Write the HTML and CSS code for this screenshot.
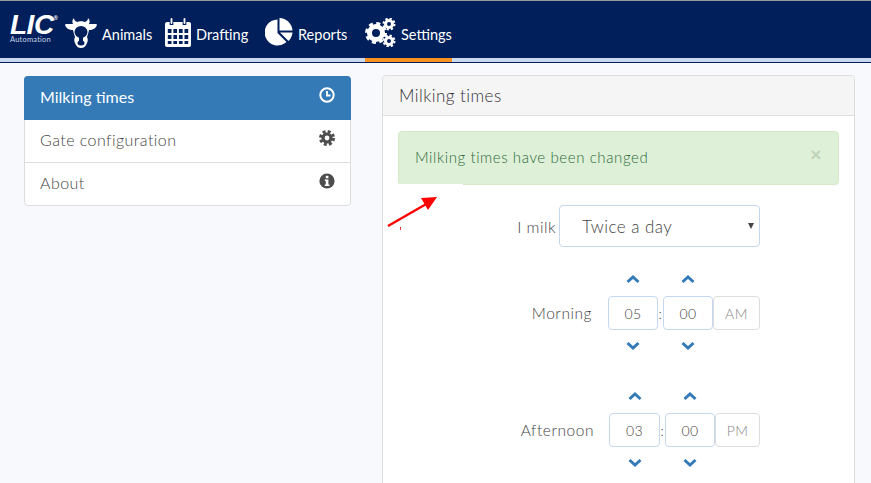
FILE: index.html
```html
<!DOCTYPE html>
<html lang="en">
<head>
    <meta charset="UTF-8">
    <title>Milking times</title>
    <link rel="stylesheet" href="styles.css">
</head>
<body>
    <!-- Top navigation -->
    <nav class="navbar">
        <div class="logo">
            <div class="logo-mark">LIC<sup>®</sup></div>
            <div class="logo-sub">Automation</div>
        </div>
        <a class="nav-item nav-animals">
            <svg width="32" height="32" viewBox="0 0 32 32"><path fill="#fff" d="M9 2c0 2 1 3 3 4 2-1 6-1 8 0 2-1 3-2 3-4 2 2 2 4 1 6l7 0c1 .5 1 1 1 1-1 3-4 5-8 5-.5 3-1.500 5-2 7 1 2 1 4 0 6-1 3-3 5-6 5s-5-2-6-5c-1-2-1-4 0-6-.5-2-1.500-4-2-7-4 0-7-2-8-5 0 0 0-.5 1-1l7 0C7 6 7 4 9 2z"/><ellipse fill="#001f5b" cx="16" cy="16" rx="6.500" ry="6"/><rect fill="#001f5b" x="14" y="20" width="4" height="6"/><ellipse fill="#001f5b" cx="16" cy="27" rx="3.500" ry="2.500"/></svg>
            <span>Animals</span>
        </a>
        <a class="nav-item nav-drafting">
            <svg class="calendar" width="26" height="29" viewBox="0 0 28 29" preserveAspectRatio="none"><path fill="#fff" fill-rule="evenodd" d="M2 4h3v3h4V4h10v3h4V4h3c1 0 2 1 2 2v21c0 1-1 2-2 2H2c-1 0-2-1-2-2V6c0-1 1-2 2-2zM3 11v4h4v-4zm6 0v4h4v-4zm6 0v4h4v-4zm6 0v4h4v-4zM3 17v4h4v-4zm6 0v4h4v-4zm6 0v4h4v-4zm6 0v4h4v-4zM3 23v3h4v-3zm6 0v3h4v-3zm6 0v3h4v-3zm6 0v3h4v-3z"/><rect fill="#fff" x="6" y="0" width="2" height="6" rx="1"/><rect fill="#fff" x="20" y="0" width="2" height="6" rx="1"/></svg>
            <span>Drafting</span>
        </a>
        <a class="nav-item nav-reports">
            <svg width="28" height="28" viewBox="0 0 28 28"><path fill="#fff" d="M12.500 1.500V15l9 9A13 13 0 1 1 12.500 1.500z"/><path fill="#fff" d="M14.500 0A13.500 13.500 0 0 1 27.500 12.500H14.500z"/><path fill="#fff" d="M27.500 14.500a13.500 13.500 0 0 1-4 8.500l-8.500-8.500z"/></svg>
            <span>Reports</span>
        </a>
        <a class="nav-item nav-settings active">
            <svg width="31" height="29" viewBox="0 0 31 29">
                <circle cx="11" cy="15" r="6.500" fill="none" stroke="#fff" stroke-width="5"/>
                <circle cx="11" cy="15" r="9.500" fill="none" stroke="#fff" stroke-width="3" stroke-dasharray="4 3.460"/>
                <circle cx="24" cy="6" r="3.500" fill="none" stroke="#fff" stroke-width="3"/>
                <circle cx="24" cy="6" r="5.500" fill="none" stroke="#fff" stroke-width="2" stroke-dasharray="2.300 2"/>
                <circle cx="24" cy="23" r="3.500" fill="none" stroke="#fff" stroke-width="3"/>
                <circle cx="24" cy="23" r="5.500" fill="none" stroke="#fff" stroke-width="2" stroke-dasharray="2.300 2"/>
            </svg>
            <span>Settings</span>
        </a>
    </nav>

    <div class="page">
        <!-- Side menu -->
        <ul class="side-menu">
            <li class="side-item active">
                Milking times
                <svg width="16" height="16" viewBox="0 0 16 16"><circle cx="8" cy="8" r="6.700" fill="none" stroke="#fff" stroke-width="2"/><path d="M8 4v4.500h3.500" fill="none" stroke="#fff" stroke-width="1.800"/></svg>
            </li>
            <li class="side-item">
                Gate configuration
                <svg width="16" height="16" viewBox="0 0 16 16"><circle cx="8" cy="8" r="4" fill="none" stroke="#4d4d4d" stroke-width="3.200"/><circle cx="8" cy="8" r="6.500" fill="none" stroke="#4d4d4d" stroke-width="3" stroke-dasharray="2.900 2.200"/></svg>
            </li>
            <li class="side-item">
                About
                <svg width="16" height="16" viewBox="0 0 16 16"><circle cx="8" cy="8" r="7.600" fill="#4d4d4d"/><rect x="6.800" y="2.800" width="2.600" height="2.500" fill="#fff"/><path fill="#fff" d="M5.800 6.500h3.600v5h1v1.600H5.800v-1.600h1V8.100h-1z"/></svg>
            </li>
        </ul>

        <!-- Milking times panel -->
        <section class="panel">
            <div class="panel-heading">Milking times</div>
            <div class="panel-body">
                <div class="alert">
                    Milking times have been changed
                    <span class="alert-close">×</span>
                </div>
                <div class="alert-notch"></div>

                <svg class="arrow" width="54" height="36" viewBox="0 0 54 36">
                    <path d="M2 31L42 8" stroke="#f00" stroke-width="2.400"/>
                    <path d="M51 2L35 3l7 12z" fill="#f00"/>
                    <rect x="14" y="32" width="1" height="3" fill="#e33"/>
                </svg>

                <div class="milk-form">
                    <div class="frequency-row">
                        <label class="frequency-label">I milk</label>
                        <div class="fake-select">Twice a day<span class="select-caret"></span></div>
                    </div>

                    <div class="time-row">
                        <label class="time-label">Morning</label>
                        <div class="time-picker morning">
                            <span class="chevron chevron-up"><svg width="14" height="9" viewBox="0 0 14 9"><path d="M1.500 7L7 2l5.500 5" fill="none" stroke="#337ab7" stroke-width="3"/></svg></span>
                            <span></span>
                            <span class="chevron chevron-up"><svg width="14" height="9" viewBox="0 0 14 9"><path d="M1.500 7L7 2l5.500 5" fill="none" stroke="#337ab7" stroke-width="3"/></svg></span>
                            <span></span>
                            <div class="time-box">05</div>
                            <span class="colon">:</span>
                            <div class="time-box">00</div>
                            <div class="ampm">AM</div>
                            <span class="chevron chevron-down"><svg width="14" height="9" viewBox="0 0 14 9"><path d="M1.500 2L7 7l5.500-5" fill="none" stroke="#337ab7" stroke-width="3"/></svg></span>
                            <span></span>
                            <span class="chevron chevron-down"><svg width="14" height="9" viewBox="0 0 14 9"><path d="M1.500 2L7 7l5.500-5" fill="none" stroke="#337ab7" stroke-width="3"/></svg></span>
                            <span></span>
                        </div>
                    </div>

                    <div class="time-row afternoon-row">
                        <label class="time-label">Afternoon</label>
                        <div class="time-picker afternoon">
                            <span class="chevron chevron-up"><svg width="14" height="9" viewBox="0 0 14 9"><path d="M1.500 7L7 2l5.500 5" fill="none" stroke="#337ab7" stroke-width="3"/></svg></span>
                            <span></span>
                            <span class="chevron chevron-up"><svg width="14" height="9" viewBox="0 0 14 9"><path d="M1.500 7L7 2l5.500 5" fill="none" stroke="#337ab7" stroke-width="3"/></svg></span>
                            <span></span>
                            <div class="time-box">03</div>
                            <span class="colon">:</span>
                            <div class="time-box">00</div>
                            <div class="ampm">PM</div>
                            <span class="chevron chevron-down"><svg width="14" height="9" viewBox="0 0 14 9"><path d="M1.500 2L7 7l5.500-5" fill="none" stroke="#337ab7" stroke-width="3"/></svg></span>
                            <span></span>
                            <span class="chevron chevron-down"><svg width="14" height="9" viewBox="0 0 14 9"><path d="M1.500 2L7 7l5.500-5" fill="none" stroke="#337ab7" stroke-width="3"/></svg></span>
                            <span></span>
                        </div>
                    </div>
                </div>
            </div>
        </section>
    </div>
</body>
</html>
```

FILE: styles.css
```css
/* General styles */
html, body {
    height: 483px;
    overflow: hidden;
}

body {
    margin: 0;
    font-family: 'Lato', 'Noto Sans', sans-serif;
    font-size: 16px;
    font-weight: 300;
    letter-spacing: 0.45px;
    color: #444;
    background-color: #f7f9fd;
}

/* Navbar */
.navbar {
    display: flex;
    height: 57px;
    padding-left: 10px;
    background-color: #001f5b;
    border-top: 1px solid #999;
    border-bottom: 4px solid #c9d8ec;
    box-shadow: 0 1px 0 #001f5b;
    color: #fff;
}

.logo {
    width: 55px;
    padding-top: 13px;
    color: #fff;
}

.logo-mark {
    font-family: 'Liberation Sans', sans-serif;
    font-size: 28px;
    line-height: 22px;
    font-weight: bold;
    font-style: italic;
    letter-spacing: -0.5px;
}

.logo-mark sup {
    font-size: 6px;
    line-height: 0;
    vertical-align: 14px;
    font-style: normal;
}

.logo-sub {
    font-size: 7.500px;
    font-weight: 400;
    line-height: 8px;
    letter-spacing: 0.2px;
    color: #c9d3e6;
}

.nav-item {
    display: flex;
    align-items: center;
    height: 61px;
    padding-top: 5px;
    box-sizing: border-box;
    border-bottom: 4px solid transparent;
    font-size: 14.500px;
    font-weight: 400;
    letter-spacing: 0;
    color: #fff;
}

.nav-item span {
    padding-top: 4px;
}

.nav-item svg {
    margin-right: 5px;
}

.nav-animals,
.nav-drafting,
.nav-reports {
    width: 100px;
}

.nav-settings {
    width: 87px;
}

.nav-settings.active {
    border-bottom-color: #f7931e;
}

/* Page layout */
.page {
    display: flex;
    align-items: flex-start;
    padding: 13px 16px 0 24px;
    gap: 31px;
}

/* Side menu */
.side-menu {
    flex: 0 0 327px;
    margin: 1px 0 0;
    padding: 0;
    list-style: none;
    background-color: #fff;
    border: 1px solid #ddd;
    border-radius: 4px;
    box-sizing: border-box;
}

.side-item {
    display: flex;
    justify-content: space-between;
    height: 43px;
    padding: 9px 15px 0;
    box-sizing: border-box;
    line-height: 22px;
    border-bottom: 1px solid #ddd;
}

.side-item svg {
    margin-top: 1px;
}

.side-item:last-child {
    height: 42px;
    border-bottom: none;
}

.side-item.active {
    height: 44px;
    margin: -1px -1px 0;
    padding: 10px 16px 0;
    font-weight: 400;
    letter-spacing: 0;
    color: #fff;
    background-color: #337ab7;
    border-bottom: none;
    border-radius: 4px 4px 0 0;
}

/* Panel */
.panel {
    position: relative;
    flex: 0 0 473px;
    height: 460px;
    background-color: #fff;
    border: 1px solid #ddd;
    border-radius: 4px;
    box-sizing: border-box;
}

.panel-heading {
    height: 40px;
    padding-left: 16px;
    box-sizing: border-box;
    line-height: 40px;
    font-size: 17px;
    color: #333;
    background-color: #f5f5f5;
    border-bottom: 1px solid #ddd;
    border-radius: 4px 4px 0 0;
}

.panel-body {
    padding: 15px 15px 0;
}

.alert {
    display: flex;
    justify-content: space-between;
    height: 54px;
    padding: 0 16px;
    box-sizing: border-box;
    line-height: 51px;
    font-size: 15px;
    letter-spacing: 0.6px;
    color: #2c6a3a;
    background-color: #dff0d8;
    border: 1px solid #d6e9c6;
    border-radius: 4px;
}

.alert-close {
    font-family: 'Liberation Sans', sans-serif;
    font-size: 19px;
    font-weight: bold;
    line-height: 46px;
    color: #c0d4b8;
}

/* white sliver under the alert, left over from the capture */
.alert-notch {
    position: absolute;
    left: 15px;
    top: 108px;
    width: 65px;
    height: 2px;
    background-color: #fff;
}

.arrow {
    position: absolute;
    left: 3px;
    top: 119px;
}

/* Form */
.milk-form {
    display: flex;
    flex-direction: column;
    align-items: flex-end;
    margin-right: 79px;
    padding-top: 20px;
}

.frequency-row {
    display: flex;
    align-items: center;
    gap: 3px;
}

.fake-select {
    position: relative;
    width: 201px;
    height: 42px;
    padding-left: 22px;
    box-sizing: border-box;
    line-height: 42px;
    font-size: 17px;
    background-color: #fff;
    border: 1px solid #c5d8ef;
    border-radius: 4px;
}

.select-caret {
    position: absolute;
    right: 5px;
    top: 17px;
    border-left: 3px solid transparent;
    border-right: 3px solid transparent;
    border-top: 6px solid #444;
}

.time-row {
    display: flex;
    align-items: center;
    gap: 16px;
    margin-top: 21px;
}

.afternoon-row {
    gap: 15px;
    margin-top: 27px;
}

.time-label {
    font-size: 15.500px;
    letter-spacing: 0.55px;
}

.time-picker {
    display: grid;
    grid-template-rows: 28px 34px 28px;
    justify-items: center;
    align-items: center;
    font-size: 14px;
}

.time-picker.morning {
    grid-template-columns: 50px 5px 50px 47px;
}

.time-picker.afternoon {
    grid-template-columns: 51px 5px 50px 45px;
}

.chevron {
    display: flex;
}

.chevron-up {
    padding-bottom: 6px;
}

.chevron-down {
    padding-top: 2px;
}

.time-box,
.ampm {
    width: 100%;
    height: 34px;
    box-sizing: border-box;
    line-height: 34px;
    text-align: center;
    border-radius: 4px;
    border: 1px solid #c5d8ef;
}

.ampm {
    color: #888;
    border-color: #ddd;
}
```
